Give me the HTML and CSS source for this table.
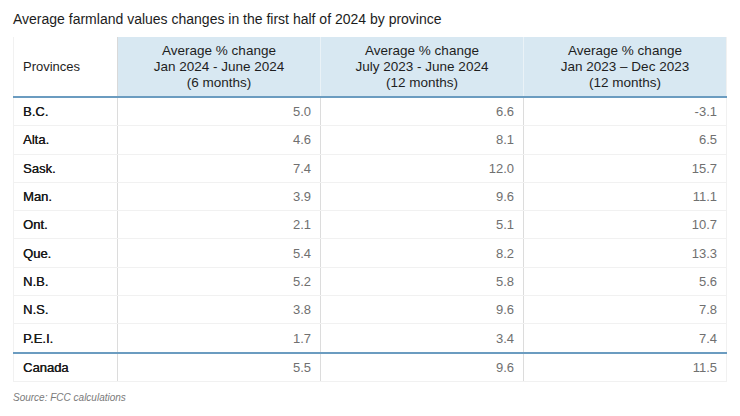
FILE: index.html
```html
<!DOCTYPE html>
<html lang="en">
<head>
<meta charset="utf-8">
<link rel="stylesheet" href="styles.css">
</head>
<body>
<div class="page">
  <h1 class="title">Average farmland values changes in the first half of 2024 by province</h1>
  <table class="data">
    <colgroup>
      <col class="c-prov">
      <col class="c-val">
      <col class="c-val">
      <col class="c-val">
    </colgroup>
    <thead>
      <tr>
        <th class="prov-head">Provinces</th>
        <th class="col-head">Average % change<br>Jan 2024 - June 2024<br>(6 months)</th>
        <th class="col-head">Average % change<br>July 2023 - June 2024<br>(12 months)</th>
        <th class="col-head">Average % change<br>Jan 2023 – Dec 2023<br>(12 months)</th>
      </tr>
    </thead>
    <tbody>
      <tr><td class="prov">B.C.</td><td class="num">5.0</td><td class="num">6.6</td><td class="num">-3.1</td></tr>
      <tr><td class="prov">Alta.</td><td class="num">4.6</td><td class="num">8.1</td><td class="num">6.5</td></tr>
      <tr><td class="prov">Sask.</td><td class="num">7.4</td><td class="num">12.0</td><td class="num">15.7</td></tr>
      <tr><td class="prov">Man.</td><td class="num">3.9</td><td class="num">9.6</td><td class="num">11.1</td></tr>
      <tr><td class="prov">Ont.</td><td class="num">2.1</td><td class="num">5.1</td><td class="num">10.7</td></tr>
      <tr><td class="prov">Que.</td><td class="num">5.4</td><td class="num">8.2</td><td class="num">13.3</td></tr>
      <tr><td class="prov">N.B.</td><td class="num">5.2</td><td class="num">5.8</td><td class="num">5.6</td></tr>
      <tr><td class="prov">N.S.</td><td class="num">3.8</td><td class="num">9.6</td><td class="num">7.8</td></tr>
      <tr><td class="prov">P.E.I.</td><td class="num">1.7</td><td class="num">3.4</td><td class="num">7.4</td></tr>
    </tbody>
    <tfoot>
      <tr><td class="prov">Canada</td><td class="num">5.5</td><td class="num">9.6</td><td class="num">11.5</td></tr>
    </tfoot>
  </table>
  <p class="source">Source: FCC calculations</p>
</div>
</body>
</html>
```

FILE: styles.css
```css
html, body {
  margin: 0;
  padding: 0;
  background: #ffffff;
}

.page {
  padding: 11px 14px 0 13px;
  font-family: "Liberation Sans", Arial, sans-serif;
  color: #1f1f1f;
}

.title {
  margin: 0 0 10px 0;
  font-size: 14px;
  font-weight: normal;
  line-height: 16px;
  color: #1c1c1c;
}

.data {
  width: 713px;
  border-collapse: collapse;
  table-layout: fixed;
  border-left: 1px solid #f1f1f1;
  border-right: 1px solid #f1f1f1;
}

.c-prov {
  width: 104px;
}

.c-val {
  width: 203px;
}

.data th {
  height: 59px;
  padding: 0;
  font-size: 13.5px;
  line-height: 16px;
  font-weight: normal;
  color: #1e1e1e;
  border-bottom: 2px solid #6b9cc0;
}

.prov-head {
  text-align: left;
  padding-left: 9px !important;
  font-size: 13px !important;
  background: #ffffff;
  border-right: 1px solid #d9d9d9;
}

.col-head {
  text-align: center;
  background: #d8e8f2;
  border-right: 1px solid #eaf2f7;
}

.col-head:last-child {
  border-right: none;
}

.data td {
  height: 27.3px;
  padding: 0 9px;
  font-size: 13px;
  border-bottom: 1px solid #f1f1f1;
  border-right: 1px solid #dcdcdc;
}

.data td:last-child {
  border-right: none;
}

.prov {
  color: #1a1a1a;
  text-shadow: 0.3px 0 0 #1a1a1a;
}

.num {
  text-align: right;
  color: #707070;
}

.data tbody tr:last-child td {
  border-bottom: 2px solid #6b9cc0;
}

.data tfoot td {
  border-bottom: 1px solid #f1f1f1;
}

.source {
  margin: 10px 0 0 0;
  font-size: 10px;
  font-style: italic;
  color: #7a7a7a;
}
```
